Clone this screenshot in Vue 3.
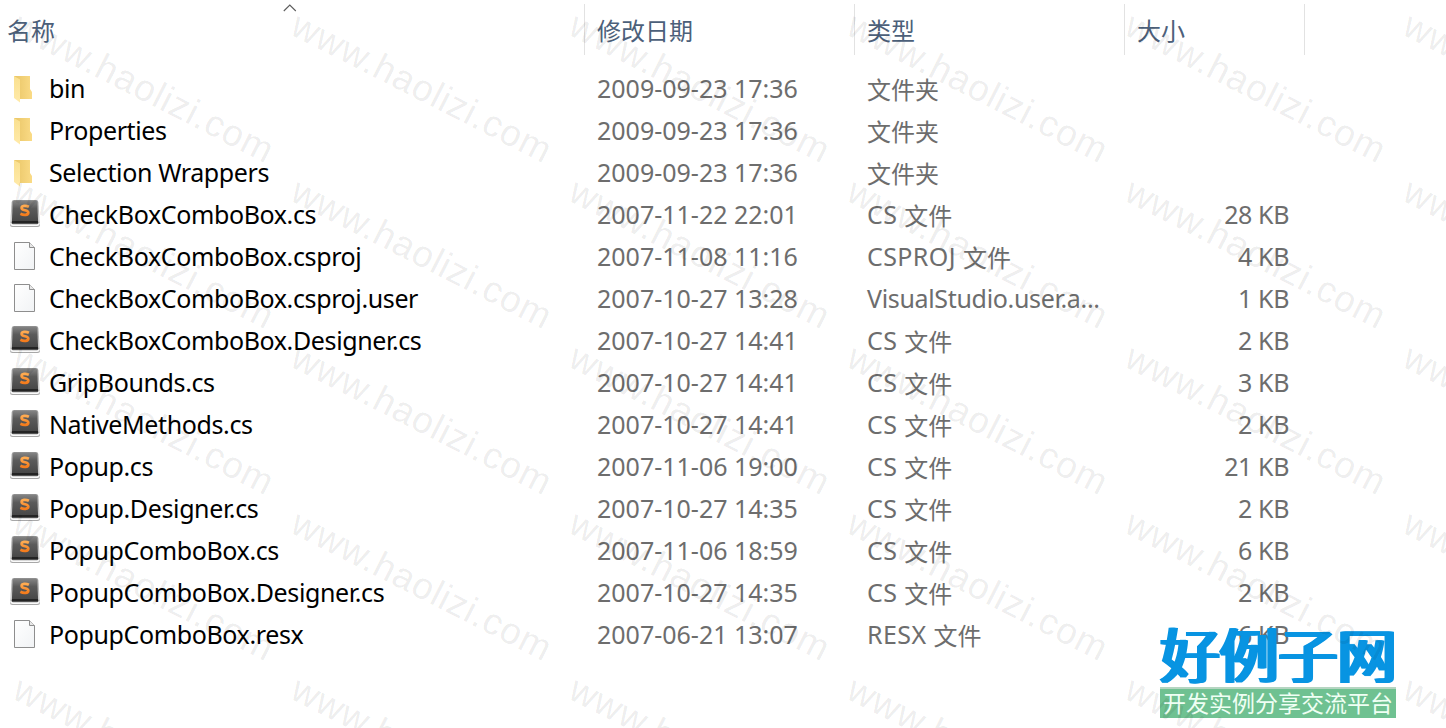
<template>
  <div class="explorer">
    <div class="header">
      <div v-for="column in columns" :key="column" class="heading">
        {{ column }}
      </div>
      <svg class="sort-arrow" width="14" height="8" viewBox="0 0 14 8">
        <path d="M0.8 7 L6.8 1 L12.8 7" fill="none" stroke="#5c5c5c" stroke-width="1.1" />
      </svg>
    </div>

    <div class="rows">
      <div v-for="file in files" :key="file.name" class="row">
        <div class="icon">
          <svg v-if="file.icon === 'folder'" width="40" height="42" viewBox="0 0 40 42">
            <defs>
              <linearGradient id="folder-back" x1="0" x2="1">
                <stop offset="0" stop-color="#e9c566" />
                <stop offset="1" stop-color="#fadb86" />
              </linearGradient>
              <linearGradient id="folder-front" x1="0" x2="0" y1="0" y2="1">
                <stop offset="0" stop-color="#fae08f" />
                <stop offset="1" stop-color="#ffeaa9" />
              </linearGradient>
            </defs>
            <path d="M14 8 H30 V21 L32 24 V31 H18 Z" fill="url(#folder-back)" />
            <path d="M14 8 L20 11.5 V34.5 L14 30 Z" fill="url(#folder-front)" />
          </svg>
          <svg v-else-if="file.icon === 'sublime'" width="40" height="42" viewBox="0 0 40 42">
            <defs>
              <linearGradient id="key-base" x1="0" x2="0" y1="0" y2="1">
                <stop offset="0" stop-color="#999" />
                <stop offset="0.75" stop-color="#d2d2d2" />
                <stop offset="1" stop-color="#a4a4a4" />
              </linearGradient>
              <linearGradient id="key-cap" x1="0" x2="0" y1="0" y2="1">
                <stop offset="0" stop-color="#858585" />
                <stop offset="0.35" stop-color="#5a5a5a" />
                <stop offset="1" stop-color="#444" />
              </linearGradient>
              <linearGradient id="key-letter" x1="0" x2="0" y1="0" y2="1">
                <stop offset="0" stop-color="#ffac52" />
                <stop offset="1" stop-color="#f57c1c" />
              </linearGradient>
            </defs>
            <path d="M14 6 H36 Q38 6 38.3 8 L40 30.5 Q40 33 37.5 33 H12.5 Q10 33 10 30.5 L11.7 8 Q12 6 14 6 Z" fill="url(#key-base)" />
            <path d="M11 29 Q11.2 31.2 13 31.2 H37 Q38.8 31.2 39 29" fill="none" stroke="#fafafa" stroke-width="1.6" />
            <path d="M14.5 6.6 H35.5 Q37 6.6 37.2 8.5 L38.2 29.5 H11.8 L12.8 8.5 Q13 6.6 14.5 6.6 Z" fill="url(#key-cap)" />
            <path d="M12 27 H38 L38.2 29.5 H11.8 Z" fill="#242424" />
            <path d="M28.9 12.8 C25.7 11.2 21.7 11.5 21.6 14 C21.6 17 28.4 15.6 28.3 18.6 C28.2 21.3 23.6 21.4 20.4 19.8" fill="none" stroke="url(#key-letter)" stroke-width="2.7" />
          </svg>
          <svg v-else width="40" height="42" viewBox="0 0 40 42">
            <defs>
              <linearGradient id="paper" x1="0" x2="1" y1="0" y2="1">
                <stop offset="0" stop-color="#fff" />
                <stop offset="1" stop-color="#f1f3f5" />
              </linearGradient>
            </defs>
            <path d="M14.5 6.5 H29.5 L34.5 11.5 V33.5 H14.5 Z" fill="url(#paper)" stroke="#8e8e8e" />
            <path d="M29.5 6.5 V11.5 H34.5" fill="#e8e8e8" stroke="#8e8e8e" />
          </svg>
        </div>
        <div class="name">{{ file.name }}</div>
        <div class="date">{{ file.date }}</div>
        <div class="type">
          <span v-if="file.kind" :class="['kind', { long: !file.label }]">{{ file.kind }}</span>
          <span v-if="file.label" class="label">{{ file.label }}</span>
        </div>
        <div class="size">{{ file.size }}</div>
      </div>
    </div>

    <div class="brand">
      <div class="brand-name">好例子网</div>
      <div class="brand-slogan">开发实例分享交流平台</div>
    </div>

    <svg class="watermark" width="1446" height="728" viewBox="0 0 1446 728">
      <text
        v-for="mark in marks"
        :key="mark.id"
        :transform="`translate(${mark.x} ${mark.y}) rotate(27)`"
      >www.haolizi.com</text>
    </svg>
  </div>
</template>

<script setup>
const columns = ["名称", "修改日期", "类型", "大小"];

const files = [
  { icon: "folder", name: "bin", date: "2009-09-23 17:36", label: "文件夹" },
  { icon: "folder", name: "Properties", date: "2009-09-23 17:36", label: "文件夹" },
  { icon: "folder", name: "Selection Wrappers", date: "2009-09-23 17:36", label: "文件夹" },
  { icon: "sublime", name: "CheckBoxComboBox.cs", date: "2007-11-22 22:01", kind: "CS", label: "文件", size: "28 KB" },
  { icon: "file", name: "CheckBoxComboBox.csproj", date: "2007-11-08 11:16", kind: "CSPROJ", label: "文件", size: "4 KB" },
  { icon: "file", name: "CheckBoxComboBox.csproj.user", date: "2007-10-27 13:28", kind: "VisualStudio.user.a...", size: "1 KB" },
  { icon: "sublime", name: "CheckBoxComboBox.Designer.cs", date: "2007-10-27 14:41", kind: "CS", label: "文件", size: "2 KB" },
  { icon: "sublime", name: "GripBounds.cs", date: "2007-10-27 14:41", kind: "CS", label: "文件", size: "3 KB" },
  { icon: "sublime", name: "NativeMethods.cs", date: "2007-10-27 14:41", kind: "CS", label: "文件", size: "2 KB" },
  { icon: "sublime", name: "Popup.cs", date: "2007-11-06 19:00", kind: "CS", label: "文件", size: "21 KB" },
  { icon: "sublime", name: "Popup.Designer.cs", date: "2007-10-27 14:35", kind: "CS", label: "文件", size: "2 KB" },
  { icon: "sublime", name: "PopupComboBox.cs", date: "2007-11-06 18:59", kind: "CS", label: "文件", size: "6 KB" },
  { icon: "sublime", name: "PopupComboBox.Designer.cs", date: "2007-10-27 14:35", kind: "CS", label: "文件", size: "2 KB" },
  { icon: "file", name: "PopupComboBox.resx", date: "2007-06-21 13:07", kind: "RESX", label: "文件", size: "6 KB" },
];

// diagonal watermark, repeated every 278 x 166
const marks = [];
for (let row = 0; row < 5; row++) {
  for (let col = 0; col < 6; col++) {
    marks.push({ id: `${row}-${col}`, x: 10.5 + col * 278, y: 33.5 + row * 166 });
  }
}
</script>

<style>
body {
  margin: 0;
  background: #fff;
}
</style>

<style scoped>
.explorer {
  position: relative;
  width: 1446px;
  height: 728px;
  overflow: hidden;
  background: #fff;
  font-family: "Noto Sans", "Noto Sans CJK SC", sans-serif;
  font-size: 25px;
  color: #6d6d6d;
}

.header {
  position: relative;
  display: grid;
  grid-template-columns: 585px 270px 270px 180px;
  padding-top: 4px;
  height: 64px;
}

.heading {
  box-sizing: border-box;
  height: 51px;
  padding-left: 12px;
  border-right: 1px solid #e2e2e2;
  font-family: "Noto Sans CJK SC", sans-serif;
  font-size: 24px;
  line-height: 52px;
  color: #4c607a;
}

.heading:first-child {
  padding-left: 7px;
}

.sort-arrow {
  position: absolute;
  left: 283px;
  top: 4px;
}

.row {
  display: grid;
  grid-template-columns: 49px 548px 270px 270px 152px;
  height: 42px;
  line-height: 40px;
  white-space: nowrap;
}

.icon svg {
  display: block;
}

.name {
  letter-spacing: -0.38px;
  color: #000;
}

.type {
  display: flex;
  gap: 7px;
}

.kind {
  letter-spacing: 0.4px;
}

.kind.long {
  letter-spacing: -0.33px;
}

.label {
  font-family: "Noto Sans CJK SC", sans-serif;
  font-size: 24px;
  line-height: 42px;
}

.size {
  letter-spacing: -0.4px;
  text-align: right;
}

.brand {
  position: absolute;
  left: 1160px;
  top: 624px;
  width: 236px;
}

.brand-name {
  height: 63px;
  font-family: "Noto Sans CJK SC", sans-serif;
  font-size: 59px;
  font-weight: 400;
  line-height: 57px;
  white-space: nowrap;
  color: #0894e2;
  text-shadow: 1px 0 #0894e2, 2px 0 #0894e2, 3px 0 #0894e2, -1px 0 #0894e2, -2px 0 #0894e2;
}

.brand-slogan {
  box-sizing: border-box;
  height: 31px;
  padding-left: 3px;
  border-top: 2px solid #b5d5c1;
  background: #6fc191;
  font-family: "Noto Sans CJK SC", sans-serif;
  font-size: 23px;
  line-height: 27px;
  white-space: nowrap;
  color: #effff4;
}

.watermark {
  position: absolute;
  left: 0;
  top: 0;
  pointer-events: none;
  font-family: "Liberation Sans", Arial, sans-serif;
  font-size: 37px;
  letter-spacing: 0.9px;
  fill: rgba(0, 0, 0, 0.08);
}
</style>
